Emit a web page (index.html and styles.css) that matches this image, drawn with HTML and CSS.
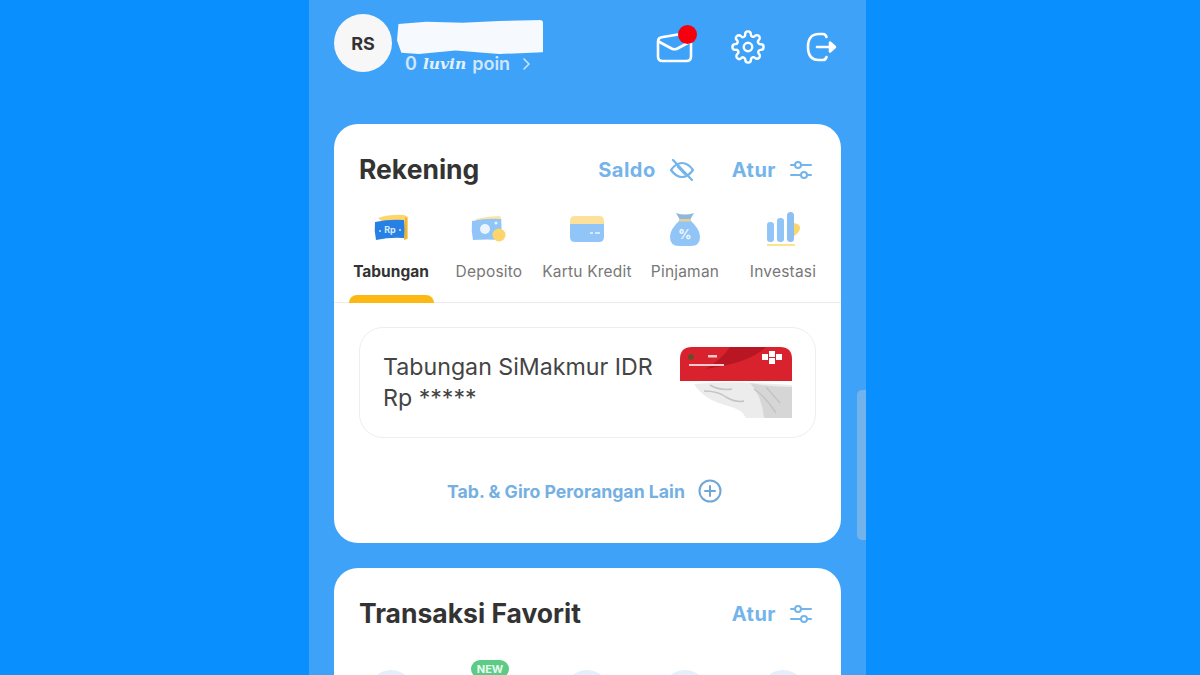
FILE: index.html
```html
<!DOCTYPE html>
<html lang="en">
<head>
    <meta charset="UTF-8">
    <title>Rekening</title>
    <link rel="stylesheet" href="styles.css">
</head>
<body>
 <main class="phone">
    <header class="top">
        <div class="user">
            <div class="avatar">RS</div>
            <div class="user-info">
                <div class="name-mask"></div>
                <div class="points"><span>0</span> <i>luvin</i> <span>poin</span>
                    <svg width="10" height="14" viewBox="0 0 10 14"><path d="M2 2l5 5-5 5" fill="none" stroke="currentColor" stroke-width="1.5" stroke-linecap="round" stroke-linejoin="round"/></svg>
                </div>
            </div>
        </div>
        <div class="top-icons">
            <div class="mail">
                <svg width="38" height="34" viewBox="0 0 38 34" fill="none" stroke="#fff" stroke-width="2.6" stroke-linecap="round" stroke-linejoin="round"><path d="M2 11.500q0-3.500 3.500-4.200L25 4M2 12v14.500q0 4.500 4.500 4.500h24q4.500 0 4.500-4.500V12"/><path d="M2.500 11.500l13 7q3 1.500 6 0l13-7"/></svg>
                <span class="dot"></span>
            </div>
            <svg class="gear" width="36" height="36" viewBox="0 0 24 24" fill="none" stroke="#fff" stroke-width="1.700" stroke-linejoin="round"><circle cx="12" cy="12" r="3"/><path d="M19.400 15a1.650 1.650 0 0 0 .33 1.820l.06.06a2 2 0 1 1-2.830 2.830l-.06-.06a1.650 1.650 0 0 0-2.800 1.170V21a2 2 0 0 1-4 0v-.09a1.650 1.650 0 0 0-2.820-1.110l-.06.06a2 2 0 1 1-2.830-2.830l.06-.06A1.650 1.650 0 0 0 3.090 14H3a2 2 0 0 1 0-4h.09A1.650 1.650 0 0 0 4.200 7.180l-.06-.06a2 2 0 1 1 2.830-2.830l.06.06A1.650 1.650 0 0 0 10 3.090V3a2 2 0 0 1 4 0v.09a1.650 1.650 0 0 0 2.800 1.170l.06-.06a2 2 0 1 1 2.830 2.830l-.06.06A1.650 1.650 0 0 0 20.910 10H21a2 2 0 0 1 0 4h-.09a1.650 1.650 0 0 0-1.510 1z"/></svg>
            <svg width="36" height="36" viewBox="0 0 36 36" fill="none" stroke="#fff" stroke-width="2.600" stroke-linecap="round" stroke-linejoin="round"><path d="M20 5h-4q-11 0-11 13t11 13h4q2.500 0 3.500-3M20 5q2.500 0 3.500 3"/><path d="M14 18h17"/><path d="M27 13.500l5 4.500-5 4.500z" fill="#fff"/></svg>
        </div>
    </header>

    <section class="card">
        <div class="card-head">
            <h2>Rekening</h2>
            <div class="head-actions">
                <span class="action">Saldo
                    <svg width="26" height="24" viewBox="0 0 26 24" fill="none" stroke="#74b4ea" stroke-width="2.200" stroke-linecap="round" stroke-linejoin="round"><path d="M2 12q5-7 11-7t11 7q-5 7-11 7T2 12z"/><path d="M9 9l7 7"/><path d="M4 2l19 20"/></svg>
                </span>
                <span class="action">Atur
                    <svg class="sliders" width="24" height="22" viewBox="0 0 24 22" fill="none" stroke="#74b4ea" stroke-width="2" stroke-linecap="round"><circle cx="9" cy="6" r="3"/><path d="M12 6h10M2 6h4"/><circle cx="15" cy="16" r="3"/><path d="M2 16h10M18 16h4"/></svg>
                </span>
            </div>
        </div>

        <div class="tabs">
            <div class="tab active">
                <svg width="38" height="36" viewBox="0 0 38 32"><path d="M6 5q12-4 26-3l4 2v22l-6-2z" fill="#fdd56b"/><path d="M33 4l2 1v21l-3 1z" fill="#e9b53a"/><path d="M3 9q14-3 29-2 1 8 0 18-14-1-28 2-2-9-1-18z" fill="#2780e3"/><text x="18" y="20" class="rp">Rp</text><circle cx="8" cy="18" r="1" fill="#cfe6ff"/><circle cx="28" cy="17" r="1" fill="#cfe6ff"/></svg>
                <span>Tabungan</span>
            </div>
            <div class="tab">
                <svg width="38" height="36" viewBox="0 0 38 32"><path d="M6 6q12-3 24-3l2 5-26 2z" fill="#fde3a3"/><path d="M2 8q14-3 29-2 1 9 0 21-14-1-28 0-2-9-1-19z" fill="#92c5f7"/><circle cx="15" cy="16" r="5" fill="#eaf5ff"/><circle cx="26" cy="10" r="1.500" fill="#eaf5ff"/><circle cx="29" cy="22" r="6.500" fill="#fdd56b"/></svg>
                <span>Deposito</span>
            </div>
            <div class="tab">
                <svg width="38" height="36" viewBox="0 0 38 32"><path d="M2 8q0-5 5-5h24q5 0 5 5v3H2z" fill="#fde09a"/><path d="M2 11h34v13q0 5-5 5H7q-5 0-5-5z" fill="#92c5f7"/><path d="M22 20h3M27 20h5" stroke="#eaf5ff" stroke-width="1.500"/></svg>
                <span>Kartu Kredit</span>
            </div>
            <div class="tab">
                <svg width="38" height="36" viewBox="0 0 38 36"><path d="M10 2q9 3 18 0l-4 7H14z" fill="#8fb7dc"/><path d="M14 9h10q10 9 10 17 0 9-9 9H13q-9 0-9-9 0-8 10-17z" fill="#92c5f7"/><rect x="13" y="8" width="12" height="2.500" rx="1" fill="#e9d08c"/><text x="19" y="28" class="pct">%</text></svg>
                <span>Pinjaman</span>
            </div>
            <div class="tab">
                <svg width="38" height="36" viewBox="0 0 38 36"><rect x="3" y="11" width="7" height="20" rx="3" fill="#92c5f7"/><rect x="13" y="7" width="7" height="24" rx="3" fill="#92c5f7"/><rect x="23" y="1" width="7" height="30" rx="3.500" fill="#8dbff2"/><path d="M30 12q6 1 6 5 0 4-6 8z" fill="#fdd56b"/><rect x="3" y="33" width="28" height="2" fill="#fbe48f"/></svg>
                <span>Investasi</span>
            </div>
        </div>

        <div class="account">
            <div class="account-text">
                <div>Tabungan SiMakmur IDR</div>
                <div>Rp *****</div>
            </div>
            <div class="bank-card">
                <svg width="112" height="71" viewBox="0 0 112 71">
                    <path d="M0 34h112v37H0z" fill="#fff"/>
                    <path d="M14 37q30-3 62-1l36 2v33H66q-4-9-18-12-24-6-34-22z" fill="#ececec"/>
                    <path d="M70 36q22 4 42 4v31H84q-2-22-14-35z" fill="#d6d6d6"/>
                    <path d="M24 44q14 0 22 6 10 6 18 4M74 42q12 8 22 24M86 40l14 16M30 38q10 6 22 4" stroke="#c4c4c4" stroke-width="1.500" fill="none"/>
                    <path d="M0 12Q0 0 12 0h88q12 0 12 12v22H0z" fill="#d8232f"/>
                    <path d="M50 0h36Q70 16 26 22 44 10 50 0z" fill="#b81622"/>
                    <circle cx="11" cy="10" r="3" fill="#6d4a2b"/>
                    <rect x="28" y="8" width="9" height="2.500" fill="#f7c9cc"/>
                    <rect x="9" y="17" width="35" height="2" fill="#f7c9cc"/>
                    <rect x="82" y="7" width="6" height="6" fill="#fff"/><rect x="89" y="4" width="6" height="6" fill="#fff"/><rect x="89" y="11" width="6" height="6" fill="#fff"/><rect x="96" y="7" width="6" height="6" fill="#fff"/>
                </svg>
            </div>
        </div>

        <div class="more">
            <span>Tab. &amp; Giro Perorangan Lain</span>
            <svg width="26" height="26" viewBox="0 0 26 26" fill="none" stroke="#6fa7d8" stroke-width="2" stroke-linecap="round"><circle cx="13" cy="13" r="10.500"/><path d="M13 8v10M8 13h10"/></svg>
        </div>
    </section>

    <section class="card">
        <div class="card-head">
            <h2>Transaksi Favorit</h2>
            <div class="head-actions">
                <span class="action">Atur
                    <svg class="sliders" width="24" height="22" viewBox="0 0 24 22" fill="none" stroke="#74b4ea" stroke-width="2" stroke-linecap="round"><circle cx="9" cy="6" r="3"/><path d="M12 6h10M2 6h4"/><circle cx="15" cy="16" r="3"/><path d="M2 16h10M18 16h4"/></svg>
                </span>
            </div>
        </div>
        <div class="favs">
            <div class="fav"></div>
            <div class="fav"><span class="new">NEW</span></div>
            <div class="fav"></div>
            <div class="fav"></div>
            <div class="fav"></div>
        </div>
    </section>

    <div class="scrollbar"></div>
 </main>
</body>
</html>
```

FILE: styles.css
```css
*{
    margin: 0;
    padding: 0;
    box-sizing: border-box;
    font-family: "Inter", "Liberation Sans", sans-serif;
}
html, body{
    height: 100%;
    overflow: hidden;
}
body{
    background-color: #0a8fff;
    padding-left: 309px;
}
.phone{
    position: relative;
    width: 557px;
    height: 675px;
    overflow: hidden;
    background-color: #3fa2f9;
    padding: 0 25px;
}
.top{
    height: 124px;
    display: flex;
    justify-content: space-between;
    padding-top: 14px;
}
.user{
    display: flex;
    gap: 5px;
}
.avatar{
    width: 58px;
    height: 58px;
    border-radius: 50%;
    background-color: #f7f7f7;
    color: #333;
    font-weight: 700;
    font-size: 18px;
    display: flex;
    align-items: center;
    justify-content: center;
}
.user-info{
    width: 146px;
    padding-top: 6px;
}
.name-mask{
    height: 34px;
    background-color: #f6f9fd;
    border-radius: 3px;
    clip-path: polygon(1% 12%, 20% 5%, 45% 8%, 70% 3%, 100% 0, 100% 95%, 70% 100%, 40% 90%, 15% 100%, 3% 96%, 0 60%);
}
.points{
    margin-left: 8px;
    color: #cfe6fb;
    font-size: 18px;
    font-weight: 600;
    line-height: 20px;
    white-space: nowrap;
    display: flex;
    align-items: center;
    gap: 6px;
}
.points i{
    font-family: "DejaVu Serif", serif;
    font-weight: 700;
    font-size: 15.500px;
    color: #e4f1fd;
}
.points svg{
    margin-left: 6px;
}
.top-icons{
    display: flex;
    gap: 38px;
    align-items: center;
    height: 66px;
    padding-right: 2px;
}
.gear{
    margin-left: 1px;
    width: 34px;
}
.mail{
    position: relative;
    width: 36px;
    height: 34px;
}
.dot{
    position: absolute;
    top: -5px;
    right: -5px;
    width: 19px;
    height: 19px;
    border-radius: 50%;
    background-color: #f5010d;
}
.card{
    background-color: #fff;
    border-radius: 24px;
    height: 419px;
    margin-bottom: 25px;
}
.card-head{
    display: flex;
    justify-content: space-between;
    align-items: center;
    padding: 24px 28px 0 25px;
    height: 66px;
}
.card-head h2{
    font-size: 26.500px;
    font-weight: 700;
    color: #333;
}
.head-actions{
    display: flex;
    gap: 37px;
    padding-top: 2px;
}
.action{
    display: flex;
    align-items: center;
    gap: 13px;
    color: #74b4ea;
    font-size: 20px;
    font-weight: 700;
    letter-spacing: .5px;
}
.tabs{
    display: flex;
    height: 92px;
    margin-top: 21px;
    padding: 0 8px;
    border-bottom: 1px solid #ececec;
}
.tab{
    width: 98px;
    display: flex;
    flex-direction: column;
    align-items: center;
    position: relative;
    font-size: 15.500px;
    letter-spacing: .2px;
    color: #777;
    white-space: nowrap;
}
.tab svg{
    height: 36px;
    flex-shrink: 0;
}
.tab span{
    margin-top: 15px;
}
.tab.active{
    color: #333;
    font-weight: 700;
    letter-spacing: 0;
}
.tab.active::after{
    content: "";
    position: absolute;
    left: 7px;
    right: 6px;
    bottom: -1px;
    height: 8px;
    background-color: #fdb913;
    border-radius: 8px 8px 0 0;
}
.rp{
    font-size: 9px;
    font-weight: 700;
    fill: #d6eaff;
    text-anchor: middle;
}
.pct{
    font-size: 13px;
    font-weight: 700;
    fill: #f2f8ff;
    text-anchor: middle;
}
.account{
    margin: 24px 25px 0;
    height: 111px;
    border: 1px solid #eee;
    border-radius: 24px;
    display: flex;
    justify-content: space-between;
    align-items: center;
    padding: 0 23px 0 23px;
}
.account-text{
    font-size: 23.200px;
    line-height: 31px;
    color: #444;
}
.bank-card{
    height: 71px;
    margin-top: -1px;
}
.more{
    display: flex;
    justify-content: center;
    align-items: center;
    gap: 12px;
    margin-top: 40px;
    padding-right: 5px;
    color: #74b0e2;
    font-size: 17.700px;
    font-weight: 700;
}
.favs{
    display: flex;
    padding: 0 8px;
}
.fav{
    width: 98px;
    height: 52px;
    display: flex;
    justify-content: center;
    position: relative;
    padding-top: 36px;
}
.fav::before{
    content: "";
    width: 46px;
    height: 46px;
    border-radius: 50%;
    background-color: #e4effb;
}
.new{
    position: absolute;
    top: 26px;
    left: 31px;
    width: 38px;
    height: 18px;
    border-radius: 9px;
    background-color: #5ccb85;
    color: #e8fbef;
    font-size: 11px;
    font-weight: 700;
    text-align: center;
    line-height: 18px;
}
.scrollbar{
    position: absolute;
    right: 0;
    top: 390px;
    width: 9px;
    height: 150px;
    border-radius: 5px 0 0 5px;
    background-color: rgba(180, 200, 220, .45);
}
```
